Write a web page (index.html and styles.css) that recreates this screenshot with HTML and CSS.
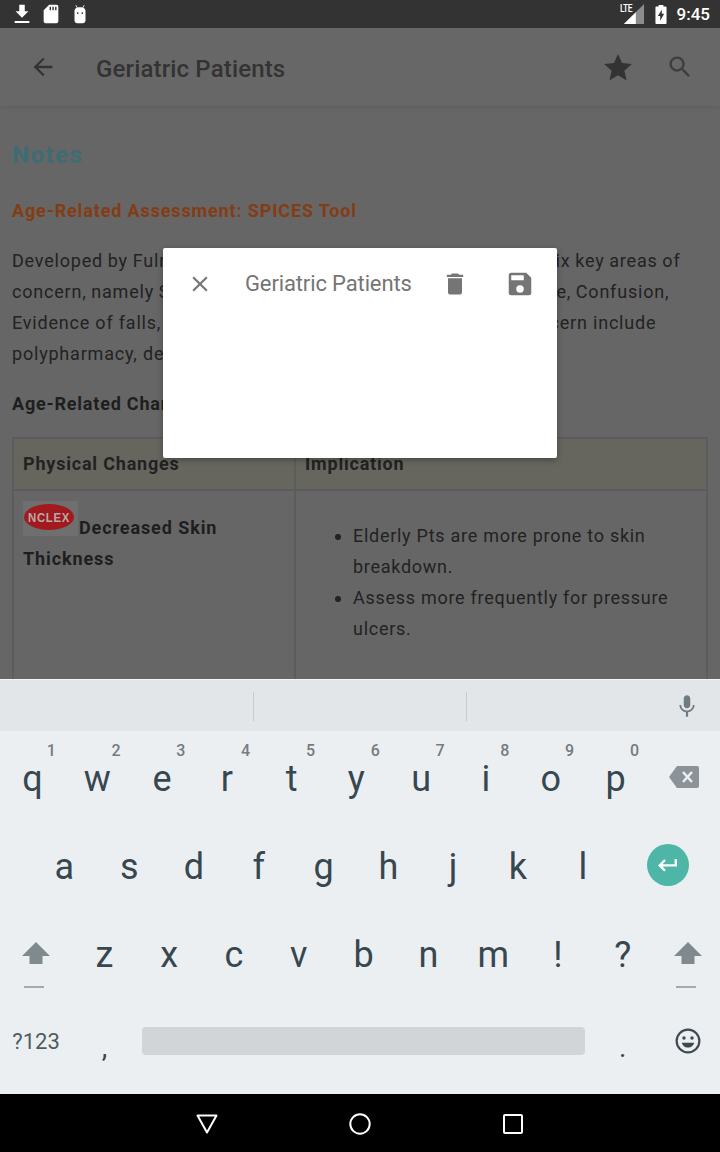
FILE: index.html
```html
<!DOCTYPE html>
<html lang="en">
<head>
<meta charset="utf-8">
<title>Geriatric Patients</title>
<link rel="stylesheet" href="styles.css">
</head>
<body>
<div class="screen">
  <header class="status">
    <div class="status-group">
      <svg class="ic-status" viewBox="0 0 24 24"><path d="M19 9h-4V2H9v7H5l7 7zM4 19.500h16v2.200H4z" fill="#fff"/></svg>
      <svg class="ic-status" viewBox="0 0 24 24"><path d="M18 2h-8L4 8v12c0 1.100.9 2 2 2h12c1.100 0 2-.9 2-2V4c0-1.100-.9-2-2-2zM12 8h-1.500V4H12zm3 0h-1.500V4H15zm3 0h-1.500V4H18z" fill="#fff"/></svg>
      <svg class="ic-status" viewBox="0 0 24 24"><path d="M6 9c0-2 1-3 2.500-3.700L7 2.500l.7-.4L9.300 5c1.700-.6 3.700-.6 5.400 0l1.600-2.900.7.4-1.500 2.800C17 6 18 7 18 9v10c0 1.700-1.300 3-3 3H9c-1.700 0-3-1.300-3-3z" fill="#fff"/><circle cx="9.500" cy="11" r="1" fill="#333"/><circle cx="14.500" cy="11" r="1" fill="#333"/></svg>
    </div>
    <div class="status-group status-right">
      <div class="signal">
        <svg class="ic-signal" viewBox="0 0 24 24"><path d="M23 1v22H1z" fill="#8c8c8c"/><path d="M14 10v13H1z" fill="#fff"/></svg>
        <span class="lte">LTE</span>
      </div>
      <svg class="ic-battery" viewBox="0 0 14 24"><path d="M4 0h6v2h3a1 1 0 0 1 1 1v20a1 1 0 0 1-1 1H1a1 1 0 0 1-1-1V3a1 1 0 0 1 1-1h3z" fill="#fff"/><path d="M8 6l-5 8h3v6l5-9H8z" fill="#333"/></svg>
      <span class="clock">9:45</span>
    </div>
  </header>

  <div class="app">
    <div class="appbar">
      <svg class="ic-back" viewBox="0 0 24 24"><path d="M20 11H7.800l5.600-5.600L12 4l-8 8 8 8 1.400-1.400L7.800 13H20z" fill="#333"/></svg>
      <h1 class="appbar-title">Geriatric Patients</h1>
      <svg class="ic-star" viewBox="0 0 24 24"><path d="M12 1.500l3.200 7.300 7.900.8-6 5.300 1.800 7.800-6.900-4.100-6.900 4.100 1.800-7.800-6-5.300 7.900-.8z" fill="#333"/></svg>
      <svg class="ic-search" viewBox="0 0 24 24"><path d="M15.500 14h-.79l-.28-.27C15.410 12.590 16 11.110 16 9.500 16 5.910 13.090 3 9.500 3S3 5.910 3 9.500 5.910 16 9.500 16c1.610 0 3.090-.59 4.230-1.570l.27.28v.79l5 4.990L20.490 19l-4.990-5zm-6 0C7.010 14 5 11.990 5 9.500S7.010 5 9.500 5 14 7.010 14 9.500 11.990 14 9.500 14z" fill="#3d3d3d"/></svg>
    </div>
    <main class="content">
      <h2 class="notes">Notes</h2>
      <h3 class="assess">Age-Related Assessment: SPICES Tool</h3>
      <p class="para">
        <span class="line line-tighter">Developed by Fulmer, SPICES is a useful tool which assesses six key areas of</span>
        <span class="line line-tight">concern, namely Sleep disorders, Problems eating, Incontinence, Confusion,</span>
        <span class="line">Evidence of falls, and Skin breakdown. Other key areas of concern include</span>
        <span class="line">polypharmacy, depression.</span>
      </p>
      <h3 class="changes">Age-Related Changes</h3>
      <table class="tbl">
        <thead>
          <tr><th class="col-a">Physical Changes</th><th>Implication</th></tr>
        </thead>
        <tbody>
          <tr>
            <td class="cell-skin">
              <svg class="nclex" viewBox="0 0 55 35"><rect width="55" height="35" fill="#6f6f6f"/><ellipse cx="26" cy="16" rx="25" ry="13" fill="#a01a1e"/><text x="26" y="21" class="nclex-text" text-anchor="middle" textLength="42" lengthAdjust="spacingAndGlyphs">NCLEX</text></svg><strong class="skin-label">Decreased Skin Thickness</strong>
            </td>
            <td class="cell-impl">
              <ul class="impl">
                <li>Elderly Pts are more prone to skin breakdown.</li>
                <li>Assess more frequently for pressure ulcers.</li>
              </ul>
            </td>
          </tr>
        </tbody>
      </table>
    </main>

    <div class="dialog">
      <svg class="ic-close" viewBox="0 0 24 24"><path d="M19 6.400L17.600 5 12 10.600 6.400 5 5 6.400l5.600 5.600L5 17.600 6.400 19l5.600-5.600 5.600 5.600 1.400-1.400-5.600-5.600z" fill="#757575"/></svg>
      <span class="dialog-title">Geriatric Patients</span>
      <svg class="ic-trash" viewBox="0 0 24 24"><path d="M6 19c0 1.100.9 2 2 2h8c1.100 0 2-.9 2-2V7H6zM19 4h-3.500l-1-1h-5l-1 1H5v2h14z" fill="#757575"/></svg>
      <svg class="ic-save" viewBox="0 0 24 24"><path d="M17 3H5a2 2 0 0 0-2 2v14a2 2 0 0 0 2 2h14a2 2 0 0 0 2-2V7zm-5 16a3 3 0 1 1 0-6 3 3 0 0 1 0 6zm3-10H5V5h10z" fill="#757575"/></svg>
    </div>
  </div>

  <section class="keyboard">
    <div class="strip">
      <span class="strip-slot strip-a"></span>
      <span class="strip-slot strip-b strip-divided"></span>
      <span class="strip-slot strip-divided strip-mic">
        <svg class="ic-mic" viewBox="0 0 24 24"><path d="M12 14c1.700 0 3-1.300 3-3V5c0-1.700-1.300-3-3-3S9 3.300 9 5v6c0 1.700 1.300 3 3 3zm5.300-3c0 3-2.500 5.100-5.300 5.100S6.700 14 6.700 11H5c0 3.400 2.700 6.200 6 6.700V22h2v-4.300c3.300-.5 6-3.300 6-6.700z" fill="#6f7c83"/></svg>
      </span>
    </div>
    <div class="rows">
      <div class="row">
        <span class="key"><sup class="num">1</sup>q</span>
        <span class="key"><sup class="num">2</sup>w</span>
        <span class="key"><sup class="num">3</sup>e</span>
        <span class="key"><sup class="num">4</sup>r</span>
        <span class="key"><sup class="num">5</sup>t</span>
        <span class="key"><sup class="num">6</sup>y</span>
        <span class="key"><sup class="num">7</sup>u</span>
        <span class="key"><sup class="num">8</sup>i</span>
        <span class="key"><sup class="num">9</sup>o</span>
        <span class="key"><sup class="num">0</sup>p</span>
        <span class="key key-grow">
          <svg class="ic-bksp" viewBox="0 0 30 22"><path d="M8 0h20a2 2 0 0 1 2 2v18a2 2 0 0 1-2 2H8L0 11z" fill="#8b9398"/><path d="M14 6l9 10M23 6l-9 10" stroke="#eceff1" stroke-width="2.600" fill="none"/></svg>
        </span>
      </div>
      <div class="row row-indent">
        <span class="key">a</span>
        <span class="key">s</span>
        <span class="key">d</span>
        <span class="key">f</span>
        <span class="key">g</span>
        <span class="key">h</span>
        <span class="key">j</span>
        <span class="key">k</span>
        <span class="key">l</span>
        <span class="key key-grow key-enter">
          <span class="enter">
            <svg class="ic-enter" viewBox="0 0 24 24"><path d="M21 6h-2.400v5.200H6.500l3.400-3.400L8.200 6.200 2 12.400l6.200 6.200 1.700-1.700-3.400-3.300H21z" fill="#fff"/></svg>
          </span>
        </span>
      </div>
      <div class="row">
        <span class="key key-side key-icon">
          <svg class="ic-shift" viewBox="0 0 28 46"><path d="M14 0l14 14h-7.500v8h-13v-8H0z" fill="#7f8a8f"/><rect x="2" y="44" width="20" height="2" fill="#a2aaae"/></svg>
        </span>
        <span class="key">z</span>
        <span class="key">x</span>
        <span class="key">c</span>
        <span class="key">v</span>
        <span class="key">b</span>
        <span class="key">n</span>
        <span class="key">m</span>
        <span class="key">!</span>
        <span class="key">?</span>
        <span class="key key-grow">
          <svg class="ic-shift" viewBox="0 0 28 46"><path d="M14 0l14 14h-7.500v8h-13v-8H0z" fill="#7f8a8f"/><rect x="2" y="44" width="20" height="2" fill="#a2aaae"/></svg>
        </span>
      </div>
      <div class="row">
        <span class="key key-side key-sym">?123</span>
        <span class="key key-comma">,</span>
        <span class="space-key"><span class="space-bar"></span></span>
        <span class="key key-period">.</span>
        <span class="key key-grow">
          <svg class="ic-emoji" viewBox="0 0 24 24"><circle cx="12" cy="12" r="10.500" fill="none" stroke="#3c4a52" stroke-width="2"/><circle cx="8.300" cy="9.200" r="1.600" fill="#3c4a52"/><circle cx="15.700" cy="9.200" r="1.600" fill="#3c4a52"/><path d="M6.300 13.500h11.400c-.6 2.700-3 4.600-5.700 4.600s-5.100-1.900-5.700-4.600z" fill="#3c4a52"/></svg>
        </span>
      </div>
    </div>
  </section>

  <nav class="navbar">
    <svg class="ic-nav" viewBox="0 0 24 24"><path d="M2.500 3.500h19L12 20.500z" fill="none" stroke="#fff" stroke-width="2" stroke-linejoin="round"/></svg>
    <svg class="ic-nav" viewBox="0 0 24 24"><circle cx="12" cy="12" r="9.700" fill="none" stroke="#fff" stroke-width="2"/></svg>
    <svg class="ic-nav" viewBox="0 0 24 24"><rect x="3" y="3" width="18" height="18" rx="1" fill="none" stroke="#fff" stroke-width="2"/></svg>
  </nav>
</div>
</body>
</html>
```
FILE: styles.css
```css
* { box-sizing: border-box; }
html, body { margin: 0; padding: 0; }
body { font-family: Roboto, "Liberation Sans", sans-serif; background: #000; }
.screen { width: 720px; height: 1152px; display: flex; flex-direction: column; overflow: hidden; }

.status { height: 28px; flex: none; background: #333; display: flex; justify-content: space-between; align-items: center; padding: 0 10px 0 11px; }
.status-group { display: flex; align-items: center; gap: 7px; }
.status-right { gap: 5px; }
.ic-status { width: 22px; height: 22px; display: block; }
.signal { position: relative; width: 22px; height: 22px; margin-right: 3px; }
.ic-signal { width: 22px; height: 22px; display: block; }
.lte { position: absolute; left: -3px; top: 0; font-size: 10px; font-weight: 500; color: #fff; line-height: 12px; letter-spacing: -.6px; transform: scaleX(.85); transform-origin: left top; }
.ic-battery { width: 12px; height: 19px; display: block; margin: 0 0 0 2px; }
.clock { color: #fff; font-size: 17px; font-weight: 500; margin-left: 5px; }

.app { position: relative; height: 651px; flex: none; overflow: hidden; background: #666; }
.appbar { height: 78px; background: #676767; display: flex; align-items: center; padding: 0 26px 0 29px; box-shadow: 0 1px 3px rgba(0,0,0,.1); position: relative; }
.ic-back { width: 28px; height: 28px; }
.appbar-title { margin: 3px 0 0 39px; flex: 1; font-size: 24px; font-weight: 500; color: #333; letter-spacing: .15px; }
.ic-star { width: 30px; height: 30px; margin-right: 33px; }
.ic-search { width: 28px; height: 28px; }

.content { padding: 0 12px; }
.notes { margin: 32px 0 0; font-size: 24px; line-height: 34px; font-weight: 700; color: #3d6c73; letter-spacing: 1.500px; }
.assess { margin: 27px 0 0; font-size: 18px; line-height: 24px; font-weight: 700; color: #843c14; letter-spacing: .86px; }
.para { margin: 22px 0 0; font-size: 18px; line-height: 31px; color: #222; letter-spacing: .8px; }
.line { display: block; white-space: nowrap; }
.line-tight { word-spacing: -.6px; }
.line-tighter { word-spacing: -.5px; }
.changes { margin: 23px 0 0; font-size: 18px; line-height: 24px; font-weight: 700; color: #1e1e1e; letter-spacing: .8px; }
.tbl { margin-top: 21px; width: 696px; border-collapse: collapse; table-layout: fixed; font-size: 18px; color: #222; letter-spacing: .72px; }
.tbl th, .tbl td { border: 2px solid #5c5c5c; text-align: left; vertical-align: top; padding: 10px 9px; }
.tbl th { background: #66665e; height: 52px; font-weight: 700; color: #222; line-height: 30px; letter-spacing: .8px; }
.col-a { width: 282px; }
.cell-skin { line-height: 31px; height: 260px; }
.skin-label { color: #1e1e1e; letter-spacing: .9px; }
.nclex { width: 55px; height: 35px; vertical-align: -2px; margin-right: 1px; }
.nclex-text { font-family: "Liberation Sans", sans-serif; font-size: 12px; font-weight: 700; fill: #b8a8a8; }
.impl { margin: 19px 0 0; padding: 0 0 0 48px; line-height: 31px; color: #222; }

.dialog { position: absolute; left: 163px; top: 220px; width: 394px; height: 210px; background: #fff; border-radius: 2px; display: flex; align-items: flex-start; padding: 23px 22px 0 24px; box-shadow: 0 2px 6px rgba(0,0,0,.3); }
.ic-close { width: 26px; height: 26px; flex: none; }
.dialog-title { margin-left: 32px; flex: 1; font-size: 22px; line-height: 26px; color: #757575; letter-spacing: -.13px; }
.ic-trash { width: 28px; height: 28px; flex: none; margin: -1px 36px 0 0; }
.ic-save { width: 30px; height: 30px; flex: none; margin-top: -2px; }

.keyboard { flex: 1; background: #eceff1; display: flex; flex-direction: column; border-top: 1px solid #f4f5f6; }
.strip { height: 51px; flex: none; background: #e3e6e8; display: flex; }
.strip-slot { flex: 1; height: 100%; position: relative; display: flex; align-items: center; }
.strip-a { flex: none; width: 253px; }
.strip-b { flex: none; width: 213px; }
.strip-divided::before { content: ""; position: absolute; left: 0; top: 12px; height: 29px; width: 1px; background: #c7cbcd; }
.strip-mic { justify-content: flex-end; padding-right: 20px; }
.ic-mic { width: 26px; height: 26px; }
.rows { flex: 1; padding: 2px 0 9px; display: flex; flex-direction: column; }
.row { flex: 1; display: flex; align-items: center; }
.row-indent { padding-left: 32px; }
.key { position: relative; width: 64.800px; flex: none; height: 100%; display: flex; align-items: center; justify-content: center; font-size: 36px; color: #37474f; padding-top: 3px; }
.key-grow { flex: 1; width: auto; padding-top: 0; }
.key-side { width: 72px; }
.key-icon { padding-top: 0; }
.num { position: absolute; right: 9px; top: 8px; font-size: 16px; line-height: 20px; font-weight: 500; color: #757b80; vertical-align: baseline; }
.ic-bksp { width: 30px; height: 22px; }
.enter { width: 42px; height: 42px; border-radius: 50%; background: #4db6a6; display: flex; align-items: center; justify-content: center; }
.ic-enter { width: 24px; height: 24px; }
.key-enter { justify-content: flex-start; padding-left: 32px; }
.ic-shift { width: 28px; height: 46px; margin-top: 24px; }
.key-sym { font-size: 22px; color: #4f5c63; padding-top: 0; }
.key-comma, .key-period { font-size: 28px; padding-top: 12px; }
.space-key { flex: none; width: 453.600px; height: 100%; display: flex; align-items: center; padding: 0 5px; }
.space-bar { display: block; width: 100%; height: 28px; border-radius: 4px; background: #d1d5d8; }
.ic-emoji { width: 26px; height: 26px; }

.navbar { height: 58px; flex: none; background: #000; display: flex; align-items: center; justify-content: center; gap: 129px; padding-top: 2px; }
.ic-nav { width: 24px; height: 24px; }
```
